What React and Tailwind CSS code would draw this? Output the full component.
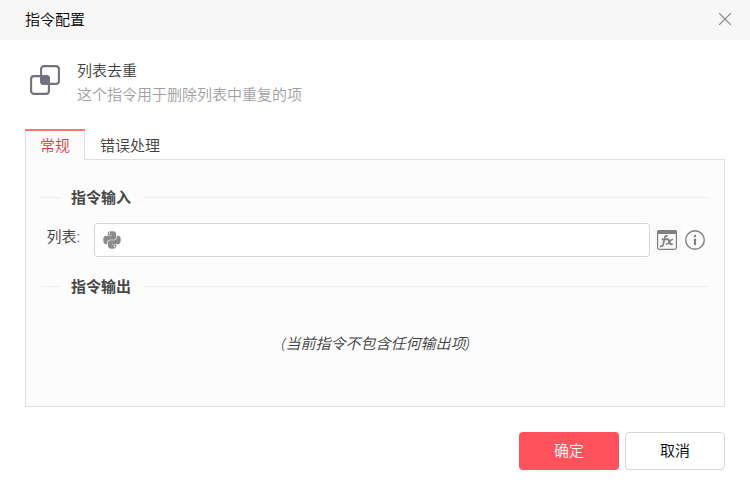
import React from 'react';
import { FaPython } from 'react-icons/fa';

const CloseIcon = () => (
  <svg width="12" height="12" viewBox="0 0 12 12" fill="none" stroke="#808080" strokeWidth="1.1">
    <path d="M0 0L12 12M12 0L0 12" />
  </svg>
);

const DedupeIcon = () => (
  <svg width="30" height="30" viewBox="0 0 30 30" fill="none" stroke="#73717d" strokeWidth="2.1">
    <rect x="11.1" y="1.1" width="17.8" height="17.8" rx="3" />
    <rect x="1.1" y="11.1" width="17.8" height="17.8" rx="3" />
    <path d="M10 10H16a4 4 0 0 1 4 4V20H14a4 4 0 0 1-4-4z" fill="#73717d" stroke="none" />
  </svg>
);

const FxIcon = () => (
  <svg width="20" height="20" viewBox="0 0 20 20" fill="none" stroke="#808080">
    <rect x="0.6" y="0.6" width="18.8" height="18.8" rx="1.8" strokeWidth="1.2" />
    <path d="M0 4V2a2 2 0 0 1 2-2h16a2 2 0 0 1 2 2v2z" fill="#808080" stroke="none" />
    <path
      d="M10.6 6.4C9.400 5.400 8.100 6.100 7.700 7.800L6.200 14.600C5.900 16 4.800 16.700 3 16.100M4.600 9.400H10.200"
      strokeWidth="1.7"
    />
    <path
      d="M9.600 9.600C11.300 8.700 12 9.600 12.300 11.200C12.700 13.600 13.300 15 15.700 13.900"
      strokeWidth="1.9"
    />
    <path
      d="M16.100 9.600C14.500 9 13.400 10.400 12.500 11.700C11.600 13.200 10.500 14.700 8.800 14.100"
      strokeWidth="1.5"
    />
  </svg>
);

const InfoIcon = () => (
  <svg width="20" height="20" viewBox="0 0 20 20" fill="none" stroke="#808080">
    <circle cx="10" cy="10" r="9.300" strokeWidth="1.400" />
    <path d="M10 5V7.200M10 8.800V15" strokeWidth="2.200" />
  </svg>
);

const SectionTitle = ({ children }) => (
  <div className="flex h-5 items-center">
    <span className="h-px w-[19px] bg-[#eeeeee]" />
    <h2 className="mr-3 ml-[11px] text-[15px] leading-5 font-bold text-[#484848]">{children}</h2>
    <span className="h-px flex-1 bg-[#eeeeee]" />
  </div>
);

const App = () => {
  return (
    <div className="flex h-[490px] w-[750px] flex-col bg-white font-['Noto_Sans','Noto_Sans_CJK_SC',sans-serif] text-[15px] leading-5 font-[350] text-[#404040]">
      <header className="flex h-10 items-center justify-between bg-[#f7f7f7] pr-[19px] pl-[25px]">
        <h1 className="pb-0.5 text-black">指令配置</h1>
        <button type="button" aria-label="关闭" className="pb-0.5">
          <CloseIcon />
        </button>
      </header>

      <div className="flex h-[89px] pt-[18px] pl-[30px]">
        <div className="pt-[7px]">
          <DedupeIcon />
        </div>
        <div className="ml-[17px] leading-6">
          <p>列表去重</p>
          <p className="text-[#a0a0a0]">这个指令用于删除列表中重复的项</p>
        </div>
      </div>

      <div className="mx-[25px] flex h-[31px]">
        <button
          type="button"
          className="flex w-[60px] flex-col border-r border-l border-[#e0e0e0] bg-[#fcfcfc] text-[#e03c41]"
        >
          <span className="-mx-px h-0.5 self-stretch bg-[#fa7378]" />
          <span className="mt-1 self-center">常规</span>
        </button>
        <button type="button" className="flex flex-1 border-b border-[#e0e0e0] pt-1.5 pl-[15px]">
          错误处理
        </button>
      </div>

      <main className="mx-[25px] h-[247px] border-r border-b border-l border-[#e0e0e0] bg-[#fcfcfc] px-[15px] pt-[27px]">
        <SectionTitle>指令输入</SectionTitle>
        <div className="mt-4 flex h-[34px]">
          <label className="w-[53px] pt-[3px] pl-[5.5px]">列表:</label>
          <div className="flex w-[556px] items-center rounded-[3px] border border-[#d6d6d6] bg-white pl-2">
            <FaPython className="h-5 w-[18px] text-[#8c8c8c]" />
          </div>
          <button type="button" className="mt-0.5 ml-[3px] flex h-[29px] w-7 items-center justify-center bg-[#f8f8f8]">
            <FxIcon />
          </button>
          <button type="button" className="ml-1 flex items-center">
            <InfoIcon />
          </button>
        </div>
        <div className="mt-[19px]">
          <SectionTitle>指令输出</SectionTitle>
        </div>
        <p className="mt-[37px] pl-px text-center italic">(当前指令不包含任何输出项)</p>
      </main>

      <footer className="mt-[25px] flex justify-end gap-1.5 pr-[25px]">
        <button type="button" className="h-[38px] w-[100px] rounded bg-[#ff525c] pb-0.5 text-white">
          确定
        </button>
        <button type="button" className="h-[38px] w-[100px] rounded border border-[#d6d6d6] bg-white pb-0.5 text-black">
          取消
        </button>
      </footer>
    </div>
  );
};

export default App;
